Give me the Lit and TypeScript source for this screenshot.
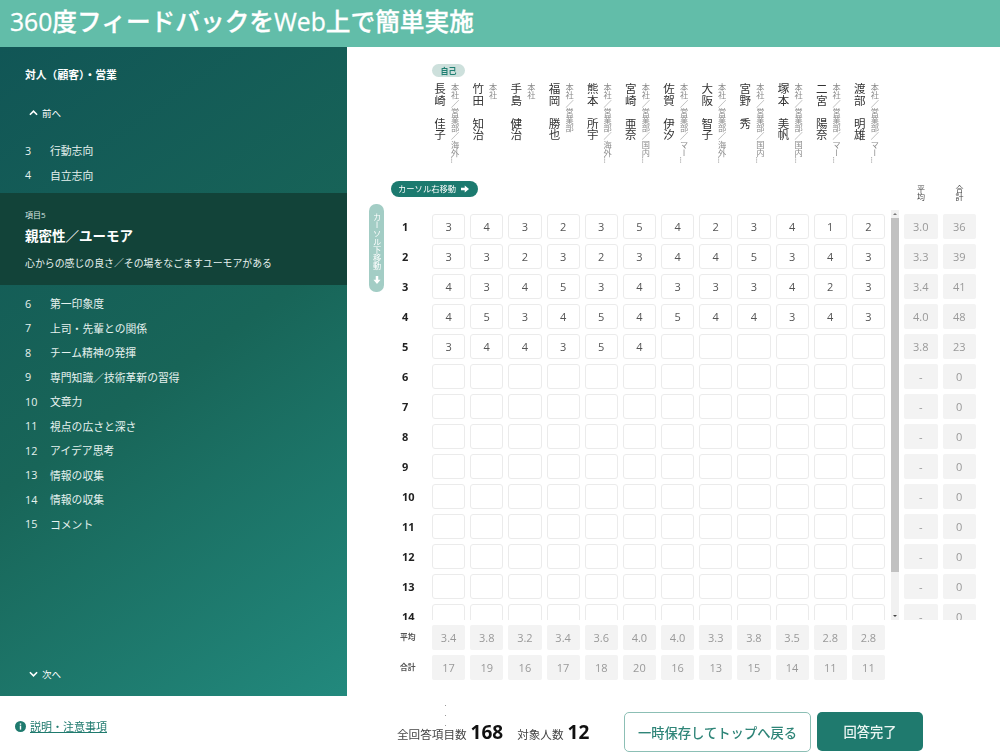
import { LitElement, html, css, svg } from "lit";
import { customElement } from "lit/decorators.js";

const PEOPLE = [
  ["長崎　佳子", "本社／営業部／海外営業課"],
  ["竹田　知治", "本社"],
  ["手島　健治", "本社"],
  ["福岡　勝也", "本社／営業部"],
  ["熊本　所宇", "本社／営業部／海外営業課"],
  ["宮崎　亜奈", "本社／営業部／国内営業課"],
  ["佐賀　伊汐", "本社／営業部／マーケティング"],
  ["大阪　智子", "本社／営業部／海外営業課"],
  ["宮野　秀", "本社／営業部／国内営業課"],
  ["塚本　美帆", "本社／営業部／国内営業課"],
  ["二宮　陽奈", "本社／営業部／マーケティング"],
  ["渡部　明雄", "本社／営業部／マーケティング"],
];
const SCORES: number[][] = [
  [3, 4, 3, 2, 3, 5, 4, 2, 3, 4, 1, 2],
  [3, 3, 2, 3, 2, 3, 4, 4, 5, 3, 4, 3],
  [4, 3, 4, 5, 3, 4, 3, 3, 3, 4, 2, 3],
  [4, 5, 3, 4, 5, 4, 5, 4, 4, 3, 4, 3],
  [3, 4, 4, 3, 5, 4],
];
const ROW_STATS = [["3.0", "36"], ["3.3", "39"], ["3.4", "41"], ["4.0", "48"], ["3.8", "23"]];
const AVG = ["3.4", "3.8", "3.2", "3.4", "3.6", "4.0", "4.0", "3.3", "3.8", "3.5", "2.8", "2.8"];
const SUM = ["17", "19", "16", "17", "18", "20", "16", "13", "15", "14", "11", "11"];
const BEFORE = [["3", "行動志向"], ["4", "自立志向"]];
const AFTER = [
  ["6", "第一印象度"], ["7", "上司・先輩との関係"], ["8", "チーム精神の発揮"],
  ["9", "専門知識／技術革新の習得"], ["10", "文章力"], ["11", "視点の広さと深さ"],
  ["12", "アイデア思考"], ["13", "情報の収集"], ["14", "情報の収集"], ["15", "コメント"],
];
const ROWS = Array.from({ length: 15 }, (_, i) => i);

const chevron = (d: string) => html`<svg class="chev" viewBox="0 0 10 6"><path d="${d}" fill="none" stroke="#fff" stroke-width="1.8"/></svg>`;
const arrowRight = svg`<path d="M0 2.6h4.2V0L9 4 4.2 8V5.4H0z" fill="#fff"/>`;

@customElement("app-root")
export class AppRoot extends LitElement {
  static styles = css`
    :host { display: block; width: 1000px; height: 753px; overflow: hidden; color: #333;
      font-family: "Open Sans", "Noto Sans CJK JP", sans-serif; }
    * { box-sizing: border-box; }
    .head { height: 47px; background: #62bda9; color: #fff; font-size: 24.7px; font-weight: 500; -webkit-text-stroke: 0.3px #fff; line-height: 44px; padding-left: 10px; white-space: nowrap; }
    .main { display: flex; height: 649px; }
    .side { width: 347px; flex: none; display: flex; flex-direction: column; color: #fff; background: linear-gradient(145deg, #115656 0%, #186558 50%, #22897d 100%); }
    .side h2 { margin: 20px 25px 0; font-size: 10.8px; line-height: 16px; font-weight: 700; }
    .nav { display: flex; align-items: center; gap: 4px; height: 16px; padding-left: 29px; font-size: 9.5px; }
    .nav.prev { margin-top: 22px; }
    .nav.next { margin-top: auto; margin-bottom: 14px; }
    .chev { width: 9px; height: 6px; }
    .list { display: flex; flex-direction: column; }
    .list.a { margin-top: 17px; }
    .list.b { margin-top: 6px; }
    .item { height: 24.5px; display: flex; align-items: center; font-size: 10.8px; color: #e6f2ef; }
    .item .n { width: 50px; padding-left: 25px; flex: none; }
    .active { margin-top: 6px; height: 92px; background: #124339; padding: 16px 25px 0; }
    .active .lb { font-size: 8px; line-height: 12px; color: #d8e6e2; }
    .active .tt { font-size: 13.5px; font-weight: 700; line-height: 20px; margin-top: 5px; }
    .active .ds { font-size: 9.9px; line-height: 14px; margin-top: 10px; color: #e6f2ef; white-space: nowrap; }
    .panel { flex: 1; display: flex; padding-left: 22px; min-width: 0; will-change: opacity; }
    .vcol { width: 22px; flex: none; padding-top: 157px; }
    .vbtn { width: 15px; height: 88px; border-radius: 7px; background: #a3cdc5; color: #fff; display: flex; flex-direction: column; align-items: center; padding-top: 9px; gap: 6px; }
    .vbtn span { writing-mode: vertical-rl; font-size: 8.2px; line-height: 15px; white-space: nowrap; }
    .vbtn svg { width: 8px; height: 8px; transform: rotate(90deg); }
    .content { flex: 1; min-width: 0; display: flex; flex-direction: column; }
    .people { margin: 17px 0 0 41px; width: 453px; display: grid; grid-template-columns: repeat(12, 1fr); column-gap: 5px; height: 103px; }
    .person { display: flex; flex-direction: column; }
    .tagslot { height: 19px; flex: none; }
    .tag { display: block; height: 13px; width: 33px; border-radius: 7px; background: #cde0dc; color: #1f7f72; font-size: 8px; font-weight: 700; line-height: 13px; text-align: center; }
    .names { display: flex; height: 84px; gap: 2px; }
    .nm { writing-mode: vertical-rl; font-size: 11.5px; line-height: 14px; color: #333; white-space: nowrap; width: 14px; flex: none; }
    .org { writing-mode: vertical-rl; font-size: 8.2px; line-height: 12px; color: #8a8a8a; white-space: nowrap; width: 12px; height: 84px; overflow: hidden; text-overflow: ellipsis; flex: none; }
    .cur { display: flex; height: 29px; margin-top: 14px; }
    .rbtn { width: 87px; height: 16px; border-radius: 8px; background: #1c7a6f; color: #fff; font-size: 8.3px; line-height: 16px; display: flex; align-items: center; gap: 5px; padding-left: 7px; white-space: nowrap; }
    .rbtn svg { width: 8px; height: 8px; }
    .sh { display: flex; gap: 5px; margin-left: 426px; padding-top: 3px; }
    .sh div { width: 33.5px; height: 17px; writing-mode: vertical-rl; font-size: 8px; line-height: 33.5px; text-align: center; color: #444; }
    .body { height: 410px; overflow: hidden; display: flex; }
    .cells { width: 494px; flex: none; padding-top: 4px; }
    .row { display: flex; height: 25px; margin-bottom: 5px; }
    .foot-rows { width: 494px; margin-top: 5px; }
    .rl { width: 41px; flex: none; padding-left: 11px; font-size: 11px; font-weight: 700; line-height: 25px; color: #222; }
    .rl.s { padding-left: 9px; font-size: 7.8px; font-weight: 600; color: #555; }
    .g { flex: 1; display: grid; grid-template-columns: repeat(12, 1fr); column-gap: 5px; }
    .c { height: 25px; border: 1px solid #ebebeb; border-radius: 3px; background: #fff; font-size: 11px; line-height: 23px; text-align: center; color: #555; }
    .t { height: 25px; background: #f3f3f3; font-size: 11px; line-height: 25px; text-align: center; color: #999; border-radius: 2px; }
    .sb { width: 8px; margin: 0 5px 0 6px; flex: none; display: flex; flex-direction: column; background: #f1f1f1; align-items: center; }
    .sb .au { flex: none; height: 8px; }
    .arr { width: 0; height: 0; border-left: 2px solid transparent; border-right: 2px solid transparent; margin-top: 3px; }
    .arr.u { border-bottom: 2px solid #777; }
    .arr.d { border-top: 2px solid #444; }
    .thumb { width: 8px; height: 354px; background: #c1c1c1; flex: none; }
    .sp { flex: 1; }
    .stats { padding-top: 4px; flex: none; }
    .sr { display: flex; gap: 5px; margin-bottom: 5px; }
    .sr .t { width: 33.5px; }
    .foot { height: 57px; display: flex; position: relative; will-change: opacity; }
    .help { width: 397px; flex: none; display: flex; align-items: center; gap: 4px; padding: 3px 0 0 15px; height: 57px; font-size: 11px; color: #1f7a6e; }
    .help svg { width: 11px; height: 11px; flex: none; }
    .help a { color: inherit; text-decoration: underline; }
    .totals { display: flex; align-items: baseline; height: 57px; padding-top: 23px; width: 227px; font-size: 11.6px; color: #444; white-space: nowrap; }
    .totals b { color: #111; font-size: 19px; font-weight: 700; line-height: 26px; margin: 0 14px 0 4px; }
    .btns { display: flex; gap: 6px; padding-top: 16px; }
    .btn { height: 40px; border-radius: 5px; font-size: 13.3px; font-weight: 500; display: flex; align-items: center; justify-content: center; white-space: nowrap; }
    .btn.o { width: 187px; border: 1px solid #8cbfb5; color: #2f8578; background: #fff; }
    .btn.p { width: 106px; height: 39px; background: #1f7a6e; color: #eaf5f2; }
    .dots { position: absolute; left: 445px; top: 9px; width: 1px; height: 40px; background: repeating-linear-gradient(#999 0 1px, transparent 1px 10px); }
  `;

  render() {
    return html`
      <div class="head">360度フィードバックをWeb上で簡単実施</div>
      <div class="main">
        <aside class="side">
          <h2>対人（顧客）・営業</h2>
          <div class="nav prev">${chevron("M1 5l4-4 4 4")}<span>前へ</span></div>
          <div class="list a">${BEFORE.map(([n, t]) => html`<div class="item"><span class="n">${n}</span><span>${t}</span></div>`)}</div>
          <div class="active">
            <div class="lb">項目5</div>
            <div class="tt">親密性／ユーモア</div>
            <div class="ds">心からの感じの良さ／その場をなごますユーモアがある</div>
          </div>
          <div class="list b">${AFTER.map(([n, t]) => html`<div class="item"><span class="n">${n}</span><span>${t}</span></div>`)}</div>
          <div class="nav next">${chevron("M1 1l4 4 4-4")}<span>次へ</span></div>
        </aside>
        <section class="panel">
          <div class="vcol">
            <div class="vbtn"><span>カーソル下移動</span><svg viewBox="0 0 9 8">${arrowRight}</svg></div>
          </div>
          <div class="content">
            <div class="people">
              ${PEOPLE.map(([nm, org], i) => html`
                <div class="person">
                  <div class="tagslot">${i === 0 ? html`<span class="tag">自己</span>` : ""}</div>
                  <div class="names"><span class="nm">${nm}</span><span class="org">${org}</span></div>
                </div>`)}
            </div>
            <div class="cur">
              <div class="rbtn"><span>カーソル右移動</span><svg viewBox="0 0 9 8">${arrowRight}</svg></div>
              <div class="sh"><div>平均</div><div>合計</div></div>
            </div>
            <div class="body">
              <div class="cells">
                ${ROWS.map((r) => html`
                  <div class="row">
                    <div class="rl">${r + 1}</div>
                    <div class="g">${Array.from({ length: 12 }, (_, c) => html`<div class="c">${SCORES[r]?.[c] ?? ""}</div>`)}</div>
                  </div>`)}
              </div>
              <div class="sb">
                <div class="au"><div class="arr u"></div></div>
                <div class="thumb"></div>
                <div class="sp"></div>
                <div class="au"><div class="arr d"></div></div>
              </div>
              <div class="stats">
                ${ROWS.map((r) => html`
                  <div class="sr"><div class="t">${ROW_STATS[r]?.[0] ?? "-"}</div><div class="t">${ROW_STATS[r]?.[1] ?? "0"}</div></div>`)}
              </div>
            </div>
            <div class="foot-rows">
              <div class="row">
                <div class="rl s">平均</div>
                <div class="g">${AVG.map((v) => html`<div class="t">${v}</div>`)}</div>
              </div>
              <div class="row">
                <div class="rl s">合計</div>
                <div class="g">${SUM.map((v) => html`<div class="t">${v}</div>`)}</div>
              </div>
            </div>
          </div>
        </section>
      </div>
      <footer class="foot">
        <div class="help">
          <svg viewBox="0 0 11 11"><circle cx="5.5" cy="5.5" r="5.5" fill="#1f7a6e"/><rect x="4.8" y="4.6" width="1.4" height="4" fill="#fff"/><rect x="4.8" y="2.4" width="1.4" height="1.4" fill="#fff"/></svg>
          <a>説明・注意事項</a>
        </div>
        <div class="totals">全回答項目数<b>168</b>対象人数<b>12</b></div>
        <div class="btns">
          <div class="btn o">一時保存してトップへ戻る</div>
          <div class="btn p">回答完了</div>
        </div>
        <div class="dots"></div>
      </footer>
    `;
  }
}
